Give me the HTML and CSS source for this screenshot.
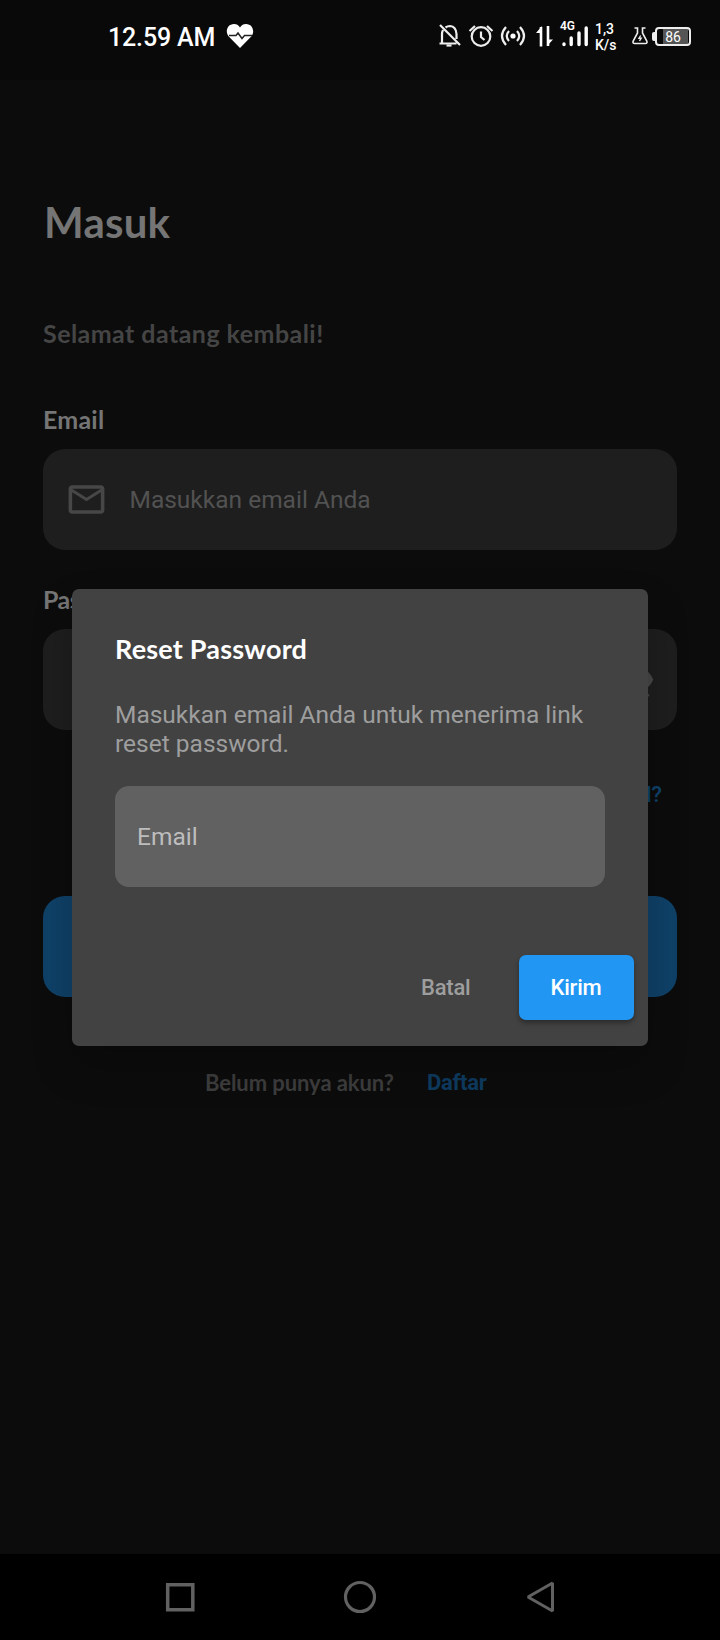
FILE: index.html
```html
<!DOCTYPE html>
<html lang="id">
<head>
<meta charset="utf-8">
<title>Masuk</title>
<link rel="stylesheet" href="styles.css">
</head>
<body>
<div class="screen">
  <header class="status">
    <span class="clock">12.59 AM</span>
    <svg class="heart" width="28" height="26" viewBox="0 0 28 26"><path d="M14 25 2.500 13.200C-1 9 1 1 8 1c3 0 5 1.700 6 3.500C15 2.700 17 1 20 1c7 0 9 8 5.500 12.200z" fill="#fff"/><path d="M3 12.500h7l2-2.500 4 5.500 2.500-3H26" fill="none" stroke="#222" stroke-width="1.500"/></svg>
    <svg class="sysicons" width="120" height="28" viewBox="437 22 120 28" fill="none" stroke="#eee" stroke-width="2.200">
      <path d="M440 25l20 20M439.500 43.500h17M442 43V34q0-2 1-4M445.500 27.500q2-1.500 4.500-1.500 6 .500 6.500 8v5"/><path d="M446.500 45.500h5"/>
      <circle cx="481" cy="36.500" r="9.300"/><path d="M481 31.500v5.500l3.500 3M469.500 31l5.500-5M492.500 31l-5.500-5"/>
      <circle cx="513" cy="36" r="2.600" fill="#fff" stroke="none"/><path d="M509 31q-4.500 5 0 10M517 31q4.500 5 0 10M506 27q-8 9 0 18M520 27q8 9 0 18"/>
      <path d="M541 46.500V27M548 26v20" stroke="#fff" stroke-width="2.600"/><path d="M542 26v7h-6zM547 46v-6.500h6z" fill="#fff" stroke="none"/>
    </svg>
    <div class="signal"><span class="net">4G</span>
      <svg width="28" height="21" viewBox="0 0 28 21" stroke="#fff" stroke-width="3.400" stroke-linecap="round"><path d="M3 18v.500M10.200 12v6.500M18 7v11.500M25.200 2v16.500"/></svg>
    </div>
    <div class="speed"><span>1,3</span><span>K/s</span></div>
    <svg class="flask" width="16" height="18" viewBox="0 0 16 18" fill="none" stroke="#eee" stroke-width="1.600"><path d="M2.500 1h3v5L1.200 14q-.8 2.500 1.500 2.500h10.600q2.300 0 1.500-2.500L10.500 6V1h3"/><path d="M8.700 8.500 7 11.200h2.200L7.500 14" stroke-width="1.400"/></svg>
    <div class="battery"><i class="tip"></i><div class="cell"><span>86</span></div></div>
  </header>

  <main class="form">
    <h1 class="title">Masuk</h1>
    <p class="welcome">Selamat datang kembali!</p>
    <div class="label">Email</div>
    <div class="input">
      <svg width="43" height="43" viewBox="0 0 24 24" fill="#474747"><path d="M22 6c0-1.100-.9-2-2-2H4c-1.100 0-2 .9-2 2v12c0 1.100.9 2 2 2h16c1.100 0 2-.9 2-2V6zm-2 0-8 5-8-5h16zm0 12H4V8l8 5 8-5v10z"/></svg>
      <span class="hint">Masukkan email Anda</span>
    </div>
    <div class="label second">Password</div>
    <div class="input end">
      <svg width="43" height="43" viewBox="0 0 24 24" fill="#474747"><path d="M12 7c2.760 0 5 2.240 5 5 0 .650-.130 1.260-.360 1.830l2.920 2.920c1.510-1.260 2.700-2.890 3.430-4.750-1.730-4.390-6-7.500-11-7.500-1.400 0-2.740.250-3.980.700l2.160 2.160C10.740 7.130 11.350 7 12 7zM2 4.270l2.280 2.280.460.460C3.080 8.300 1.780 10.020 1 12c1.730 4.390 6 7.500 11 7.500 1.550 0 3.030-.3 4.380-.840l.420.420L19.730 22 21 20.730 3.270 3 2 4.270z"/></svg>
    </div>
    <div class="forgot">Lupa Password?</div>
    <div class="login"></div>
    <div class="signup"><span class="ask">Belum punya akun?</span><span class="daftar">Daftar</span></div>
  </main>

  <nav class="nav">
    <svg width="32" height="34" viewBox="0 0 32 34" fill="none" stroke="#616161" stroke-width="3.500"><path d="M3.700 4.700h25.100v25.100H3.700z"/></svg>
    <svg width="34" height="34" viewBox="0 0 34 34" fill="none" stroke="#616161" stroke-width="3.200"><circle cx="17" cy="17" r="14.500"/></svg>
    <svg width="32" height="34" viewBox="0 0 32 34" fill="none" stroke="#616161" stroke-width="3"><path d="M28.500 3v28L4 17z" stroke-linejoin="bevel"/></svg>
  </nav>

  <section class="dialog">
    <h2 class="dialog-title">Reset Password</h2>
    <p class="dialog-text">Masukkan email Anda untuk menerima link<br>reset password.</p>
    <div class="dialog-input">Email</div>
    <div class="actions"><span class="cancel">Batal</span><span class="send">Kirim</span></div>
  </section>
</div>
</body>
</html>
```
FILE: styles.css
```css
* { box-sizing: border-box; }
body { margin: 0; background: #0c0c0c; font-family: Roboto, sans-serif; }
h1, h2, p { margin: 0; }
svg { display: block; flex: none; }

.screen {
  position: relative;
  display: flex;
  flex-direction: column;
  width: 720px;
  height: 1640px;
  overflow: hidden;
  background: #0c0c0c;
}

/* status bar */
.status {
  display: flex;
  align-items: flex-start;
  height: 80px;
  padding-left: 108px;
  background: #090909;
  color: #fff;
  white-space: nowrap;
}
.clock { width: 118px; margin-top: 23px; font-size: 25px; line-height: 30px; font-weight: 500; letter-spacing: -.15px; }
.heart { margin-top: 23px; }
.sysicons { margin: 22px 0 0 183px; }
.signal { width: 31px; height: 28px; margin: 20px 0 0 3px; font-size: 12px; line-height: 13px; font-weight: 600; }
.signal svg { margin: -7px 0 0 1px; }
.net { display: block; }
.speed { display: flex; flex-direction: column; width: 36px; margin: 21px 0 0 4px; font-size: 14px; line-height: 16px; font-weight: 500; }
.flask { margin: 27px 0 0 1px; }
.battery { display: flex; align-items: center; margin: 27px 0 0 4px; }
.tip { width: 3px; height: 9px; border-radius: 2px 0 0 2px; background: #eee; }
.cell {
  width: 36px;
  height: 19px;
  border: 2px solid #eee;
  border-radius: 4px;
  background: linear-gradient(90deg, transparent 6px, #555 6px, #555 31px, transparent 31px);
  font-size: 14px;
  line-height: 16px;
  text-align: center;
}

/* sign-in form */
.form { flex: 1; padding: 111px 43px 0; }
.title { font: 700 42px/60px Lato, sans-serif; color: #757575; padding: 1px 0 0 1px; letter-spacing: .25px; }
.welcome { margin-top: 66px; font: 700 25px/30px Lato, sans-serif; color: #454545; letter-spacing: .45px; }
.label { margin-top: 56px; font: 700 25px/30px Lato, sans-serif; color: #757575; letter-spacing: .2px; }
.second { margin-top: 34px; letter-spacing: -.5px; }
.input {
  display: flex;
  align-items: center;
  height: 101px;
  margin-top: 15px;
  padding: 0 22px;
  border-radius: 22px;
  background: #1e1e1e;
}
.end { justify-content: flex-end; }
.hint { margin-left: 21.500px; font-size: 24.5px; color: #525252; }
.forgot { margin: 52px 15px 0 0; font-size: 22px; line-height: 26px; font-weight: 500; color: #0e426b; text-align: right; }
.login { height: 101px; margin-top: 88px; border-radius: 22px; background: #0f4168; }
.signup { display: flex; margin: 73px 0 0 162px; line-height: 26px; }
.ask { width: 222px; font-family: Lato, sans-serif; font-weight: 700; font-size: 22px; color: #3d3d3d; letter-spacing: -.07px; }
.daftar { font-size: 22px; font-weight: 700; color: #0e3b60; letter-spacing: -.3px; }

/* reset dialog */
.dialog {
  position: absolute;
  left: 72px;
  top: 588.500px;
  width: 576px;
  height: 457px;
  padding: 44px 14.500px 0 43px;
  border-radius: 7px;
  background: #424242;
  box-shadow: 0 20px 40px rgba(0, 0, 0, .22);
}
.dialog-title { font: 700 27px/32px Lato, sans-serif; color: #fff; letter-spacing: .2px; }
.dialog-text { margin-top: 35px; font-size: 24.5px; line-height: 29px; color: #9e9e9e; white-space: nowrap; }
.dialog-input {
  height: 101px;
  width: 490px;
  margin-top: 28px;
  padding-left: 22px;
  border-radius: 14px;
  background: #616161;
  font-size: 24.5px;
  line-height: 102px;
  color: #bdbdbd;
}
.actions {
  display: flex;
  align-items: center;
  justify-content: flex-end;
  gap: 48px;
  margin-top: 68px;
  font-size: 22px;
  font-weight: 500;
  letter-spacing: -.2px;
}
.cancel { color: #9e9e9e; }
.send {
  width: 115px;
  height: 65px;
  border-radius: 7px;
  background: #2196f3;
  color: #fff;
  line-height: 65px;
  text-align: center;
  box-shadow: 0 3px 5px rgba(0, 0, 0, .35);
}

/* system navigation */
.nav {
  display: flex;
  align-items: flex-start;
  justify-content: space-between;
  height: 86px;
  padding: 26px 164px 0 164px;
  background: #000;
}
```
